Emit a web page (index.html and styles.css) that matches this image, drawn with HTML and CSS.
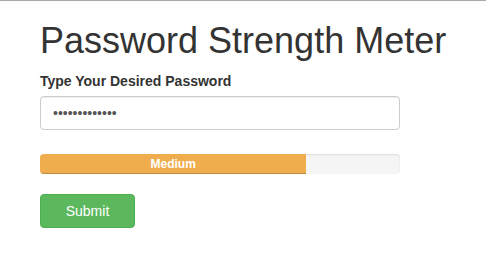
FILE: index.html
```html
<!DOCTYPE html>
<html lang="en">
<head>
<meta charset="utf-8">
<title>Password Strength Meter</title>
<link rel="stylesheet" href="styles.css">
</head>
<body>
<div class="container">
  <h1 class="title">Password Strength Meter</h1>
  <form class="form">
    <div class="form-group">
      <label class="label" for="pw">Type Your Desired Password</label>
      <input class="input" id="pw" type="password" value="abcdefghijklm">
    </div>
    <div class="progress">
      <div class="progress-bar" style="width: 74%">Medium</div>
    </div>
    <button type="button" class="btn">Submit</button>
  </form>
</div>
</body>
</html>
```

FILE: styles.css
```css
* {
  box-sizing: border-box;
}
html, body {
  margin: 0;
  padding: 0;
  background: #fff;
}
body {
  border-top: 1px solid #a8a8a8;
  font-family: "Liberation Sans", Arial, Helvetica, sans-serif;
  font-size: 14px;
  line-height: 20px;
  color: #333;
}
.container {
  padding: 0 0 0 40px;
}
.title {
  margin: 20px 0 10px;
  font-size: 36px;
  font-weight: 500;
  line-height: 1.1;
  color: #333;
  white-space: nowrap;
}
.form {
  width: 360px;
}
.form-group {
  margin-bottom: 24px;
}
.label {
  display: inline-block;
  margin-bottom: 5px;
  font-weight: bold;
}
.input {
  display: block;
  width: 100%;
  height: 34px;
  padding: 6px 12px;
  font-family: inherit;
  font-size: 14px;
  line-height: 20px;
  color: #555;
  background: #fff;
  border: 1px solid #ccc;
  border-radius: 4px;
  box-shadow: inset 0 1px 1px rgba(0, 0, 0, .075);
  outline: none;
}
.progress {
  display: flex;
  height: 20px;
  margin-bottom: 20px;
  overflow: hidden;
  background: #f5f5f5;
  border-radius: 4px;
  box-shadow: inset 0 1px 2px rgba(0, 0, 0, .1);
}
.progress-bar {
  height: 100%;
  font-size: 12px;
  font-weight: bold;
  line-height: 20px;
  color: #fff;
  text-align: center;
  background: #f0ad4e;
  box-shadow: inset 0 -1px 0 rgba(0, 0, 0, .2);
}
.btn {
  display: block;
  width: 95px;
  height: 34px;
  padding: 6px 12px;
  font-family: inherit;
  font-size: 14px;
  line-height: 20px;
  color: #fff;
  background: #5cb85c;
  border: 1px solid #4cae4c;
  border-radius: 4px;
  cursor: pointer;
}
```
